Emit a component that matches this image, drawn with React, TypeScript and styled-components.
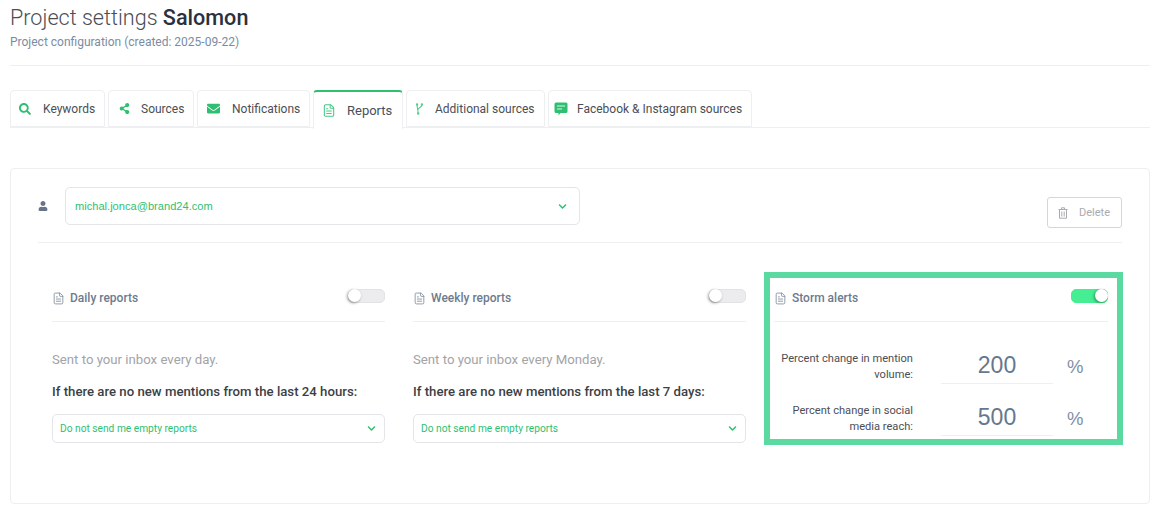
import React from 'react'
import styled, { createGlobalStyle } from 'styled-components'
import { FaSearch, FaShareAlt, FaEnvelope, FaUser, FaChevronDown } from 'react-icons/fa'
import { FileText } from 'lucide-react'

const GREEN = '#2fbf71'

const Global = createGlobalStyle`
  html, body {
    margin: 0;
    padding: 0;
    background: #fff;
    font-family: Roboto, "Liberation Sans", sans-serif;
    overflow: hidden;
  }
`

const Page = styled.div`
  width: 1160px;
  height: 512px;
  box-sizing: border-box;
  padding: 5px 10px 0;
`

const Title = styled.h1`
  margin: 0;
  font-size: 21.6px;
  line-height: 26px;
  font-weight: 300;
  color: #4a4d55;
  b {
    font-weight: 500;
    color: #2b3040;
  }
`

const Subtitle = styled.div`
  margin-top: 2px;
  font-size: 12px;
  line-height: 18px;
  color: #7a8ca3;
`

const Rule = styled.div`
  height: 1px;
  background: #eeeff1;
`

const HeadRule = styled(Rule)`
  margin-top: 14px;
`

const Tabs = styled.div`
  display: flex;
  align-items: flex-start;
  gap: 3px;
  height: 37px;
  margin-top: 24px;
  border-bottom: 1px solid #eeeff1;
`

const Tab = styled.div<{ $active?: boolean; $w: number; $pad: number; $gap: number }>`
  flex: none;
  width: ${p => p.$w}px;
  height: ${p => (p.$active ? 39 : 37)}px;
  box-sizing: border-box;
  display: flex;
  align-items: center;
  padding-left: ${p => p.$pad}px;
  gap: ${p => p.$gap}px;
  background: #fff;
  border: 1px solid #eeeff1;
  border-top: ${p => (p.$active ? `2px solid ${GREEN}` : '1px solid #eeeff1')};
  border-bottom: ${p => (p.$active ? 'none' : '1px solid #eeeff1')};
  border-radius: 4px 4px 0 0;
  font-size: ${p => (p.$active ? 13 : 12)}px;
  color: #4b4e55;
  white-space: nowrap;
  position: relative;
  z-index: 1;
`

const TabIcon = styled.span`
  display: flex;
  width: 14px;
  justify-content: center;
  color: ${GREEN};
`

const Card = styled.div`
  margin-top: 40px;
  height: 336px;
  box-sizing: border-box;
  padding: 18px 27px 0;
  border: 1px solid #eeeff1;
  border-radius: 4px;
`

const TopRow = styled.div`
  display: flex;
  align-items: flex-start;
`

const UserIcon = styled.span`
  display: flex;
  width: 27px;
  height: 37px;
  align-items: center;
  color: #66748a;
`

const Select = styled.div<{ $small?: boolean }>`
  box-sizing: border-box;
  width: ${p => (p.$small ? 333 : 515)}px;
  height: ${p => (p.$small ? 29 : 38)}px;
  display: flex;
  align-items: center;
  justify-content: space-between;
  padding: 0 ${p => (p.$small ? 8 : 12)}px 0 ${p => (p.$small ? 7 : 9)}px;
  border: 1px solid #e4e5e8;
  border-radius: 5px;
  font-family: ${p => (p.$small ? 'Roboto' : '"Liberation Sans"')}, sans-serif;
  font-size: ${p => (p.$small ? 10.2 : 11.1)}px;
  color: ${GREEN};
`

const DeleteButton = styled.div`
  box-sizing: border-box;
  margin: 10px 0 0 auto;
  width: 75px;
  height: 31px;
  display: flex;
  align-items: center;
  gap: 11px;
  padding-left: 10px;
  border: 1px solid #d5d6d9;
  border-radius: 3px;
  font-size: 11px;
  color: #a9abaf;
`

const CardRule = styled(Rule)`
  margin-top: 14px;
`

const Columns = styled.div`
  display: flex;
  align-items: flex-start;
  gap: 28px;
  margin-top: 29px;
  padding-left: 14px;
`

const Column = styled.div`
  flex: none;
  width: 333px;
  padding-top: 6px;
`

const Highlight = styled.div`
  flex: none;
  box-sizing: border-box;
  width: 359px;
  height: 173px;
  margin-left: -10px;
  padding: 0 9px 0 4px;
  border: 6px solid #5ad9a0;
`

const ColHead = styled.div`
  display: flex;
  align-items: center;
  gap: 5px;
  height: 40px;
  padding-bottom: 3px;
  font-size: 12px;
  font-weight: 500;
  color: #6d7b8e;
  border-bottom: 1px solid #eeeff1;
  svg {
    color: #7b889a;
  }
`

const Switch = styled.div<{ $on?: boolean }>`
  position: relative;
  width: 37px;
  height: 14px;
  margin: 0 0 4px auto;
  border-radius: 5px;
  background: ${p => (p.$on ? '#45ee92' : '#ececee')};
  border: 1px solid ${p => (p.$on ? '#45ee92' : '#e3e3e5')};
  box-sizing: border-box;
  &::after {
    content: '';
    position: absolute;
    top: -1px;
    ${p => (p.$on ? 'right: -1px;' : 'left: -1px;')}
    width: 13px;
    height: 13px;
    border-radius: 50%;
    background: #fff;
    box-shadow: -1px 1px 3px rgba(0, 0, 0, 0.4);
  }
`

const Muted = styled.div`
  margin-top: 29px;
  font-size: 13.2px;
  line-height: 18px;
  color: #a2a4a8;
`

const Question = styled.div`
  margin: 14px 0 13px;
  font-size: 13.2px;
  line-height: 18px;
  font-weight: 500;
  color: #3c3f45;
`

const MetricList = styled.div`
  margin-top: 17px;
`

const MetricRow = styled.div`
  display: flex;
  align-items: center;
  height: 52px;
`

const MetricLabel = styled.div`
  width: 139px;
  margin: 3px 28px 0 0;
  text-align: right;
  font-size: 11.1px;
  line-height: 16px;
  color: #4b4e55;
`

const MetricValue = styled.div`
  box-sizing: border-box;
  width: 112px;
  height: 38px;
  padding-top: 4px;
  text-align: center;
  font-family: "Liberation Sans", sans-serif;
  font-size: 23px;
  line-height: 30px;
  color: #64788f;
  border-bottom: 1px solid #eeeff1;
`

const Percent = styled.div`
  margin: 3px 0 0 14px;
  font-family: "Liberation Sans", sans-serif;
  font-size: 18.5px;
  color: #7d8fa5;
`

const ForkIcon = () => (
  <svg width="7" height="12" viewBox="0 0 7 12" fill="none" stroke="#56cf90" strokeWidth="1.1">
    <path d="M1 1.8L2.2 10" />
    <path d="M6 1.8C6 4.5 2 4.5 1.7 7" />
    <circle cx="1" cy="1.4" r="0.7" />
    <circle cx="6" cy="1.4" r="0.7" />
    <circle cx="2.2" cy="10.6" r="0.7" />
  </svg>
)

const ChatIcon = () => (
  <svg width="14" height="14" viewBox="0 0 14 14">
    <path
      d="M2 0.5H12A1.5 1.5 0 0 1 13.5 2V9.5A1.5 1.5 0 0 1 12 11H6.5L4.5 13.5V11H2A1.5 1.5 0 0 1 .5 9.5V2A1.5 1.5 0 0 1 2 .5Z"
      fill={GREEN}
    />
    <path d="M3 4H11M3 7H8" stroke="#d8f5e6" strokeWidth="1" />
  </svg>
)

const TrashIcon = () => (
  <svg width="10" height="12" viewBox="0 0 10 12" fill="none" stroke="#a9abaf" strokeWidth="1">
    <path d="M0.5 2.5H9.5M3.5 2.5V.8H6.5V2.5M1.5 2.5V11.2H8.5V2.5M3.8 4.5V9.5M6.2 4.5V9.5" />
  </svg>
)

const tabs = [
  { label: 'Keywords', w: 95, pad: 7, gap: 11, icon: <FaSearch size={12} /> },
  { label: 'Sources', w: 86, pad: 8, gap: 10, icon: <FaShareAlt size={11} /> },
  { label: 'Notifications', w: 113, pad: 8, gap: 12, icon: <FaEnvelope size={13} /> },
  { label: 'Reports', w: 90, pad: 8, gap: 11, active: true, icon: <FileText size={15} strokeWidth={1.8} color="#45c986" /> },
  { label: 'Additional sources', w: 139, pad: 5, gap: 9, icon: <ForkIcon /> },
  { label: 'Facebook & Instagram sources', w: 204, pad: 5, gap: 9, icon: <ChatIcon /> },
]

const reports = [
  { title: 'Daily reports', note: 'Sent to your inbox every day.', hours: '24 hours' },
  { title: 'Weekly reports', note: 'Sent to your inbox every Monday.', hours: '7 days' },
]

const metrics = [
  { label: 'Percent change in mention volume:', value: '200' },
  { label: 'Percent change in social media reach:', value: '500' },
]

export default function App() {
  return (
    <Page>
      <Global />
      <Title>Project settings <b>Salomon</b></Title>
      <Subtitle>Project configuration (created: 2025-09-22)</Subtitle>
      <HeadRule />

      <Tabs>
        {tabs.map(t => (
          <Tab key={t.label} $w={t.w} $pad={t.pad} $gap={t.gap} $active={t.active}>
            <TabIcon>{t.icon}</TabIcon>
            {t.label}
          </Tab>
        ))}
      </Tabs>

      <Card>
        <TopRow>
          <UserIcon><FaUser size={10} /></UserIcon>
          <Select>
            michal.jonca@brand24.com
            <FaChevronDown size={9} />
          </Select>
          <DeleteButton>
            <TrashIcon />
            Delete
          </DeleteButton>
        </TopRow>
        <CardRule />

        <Columns>
          {reports.map(r => (
            <Column key={r.title}>
              <ColHead>
                <FileText size={13} strokeWidth={1.5} />
                {r.title}
                <Switch />
              </ColHead>
              <Muted>{r.note}</Muted>
              <Question>If there are no new mentions from the last {r.hours}:</Question>
              <Select $small>
                Do not send me empty reports
                <FaChevronDown size={9} />
              </Select>
            </Column>
          ))}
          <Highlight>
            <ColHead>
              <FileText size={13} strokeWidth={1.5} />
              Storm alerts
              <Switch $on />
            </ColHead>
            <MetricList>
              {metrics.map(m => (
                <MetricRow key={m.value}>
                  <MetricLabel>{m.label}</MetricLabel>
                  <MetricValue>{m.value}</MetricValue>
                  <Percent>%</Percent>
                </MetricRow>
              ))}
            </MetricList>
          </Highlight>
        </Columns>
      </Card>
    </Page>
  )
}
